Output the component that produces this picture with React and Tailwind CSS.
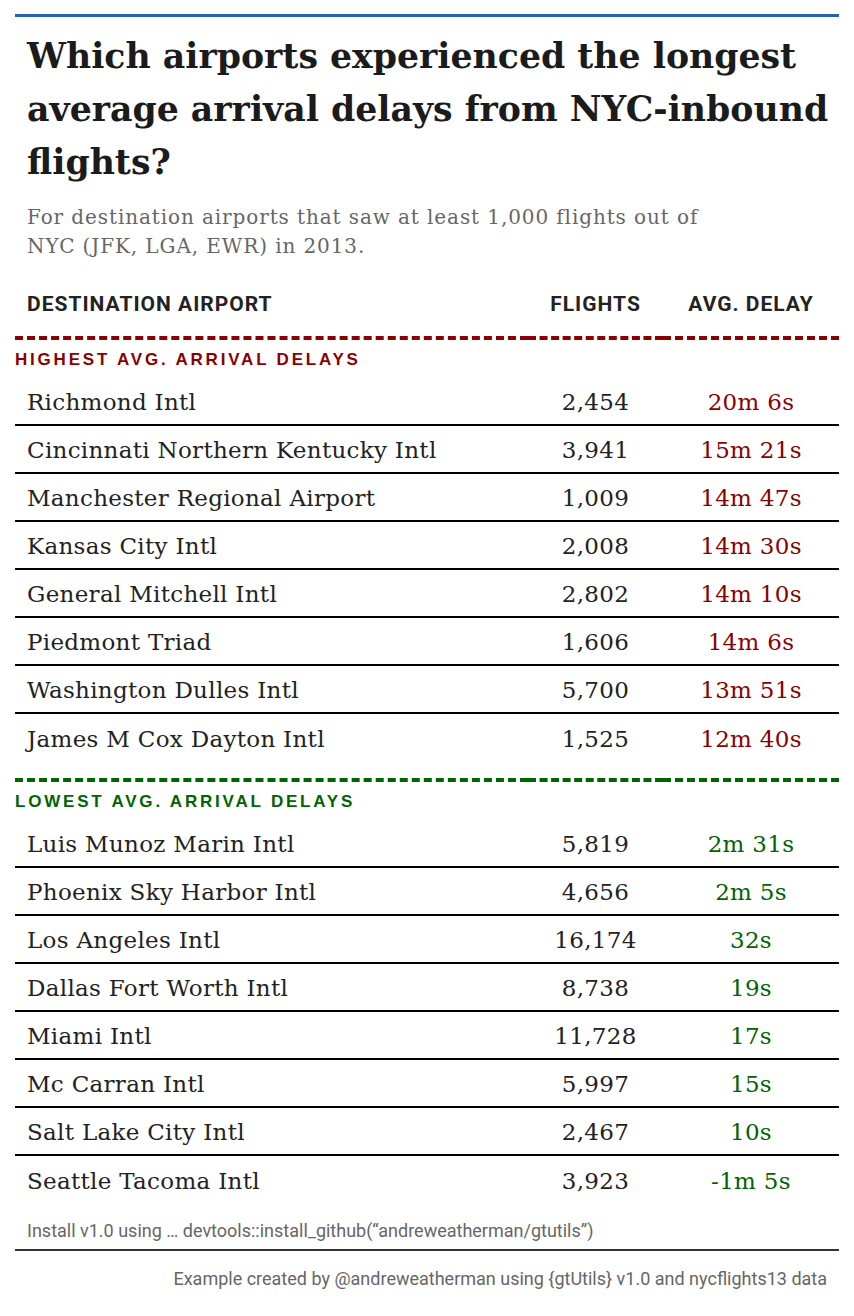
import React from 'react';

const highest = [
  ['Richmond Intl', '2,454', '20m 6s'],
  ['Cincinnati Northern Kentucky Intl', '3,941', '15m 21s'],
  ['Manchester Regional Airport', '1,009', '14m 47s'],
  ['Kansas City Intl', '2,008', '14m 30s'],
  ['General Mitchell Intl', '2,802', '14m 10s'],
  ['Piedmont Triad', '1,606', '14m 6s'],
  ['Washington Dulles Intl', '5,700', '13m 51s'],
  ['James M Cox Dayton Intl', '1,525', '12m 40s'],
];

const lowest = [
  ['Luis Munoz Marin Intl', '5,819', '2m 31s'],
  ['Phoenix Sky Harbor Intl', '4,656', '2m 5s'],
  ['Los Angeles Intl', '16,174', '32s'],
  ['Dallas Fort Worth Intl', '8,738', '19s'],
  ['Miami Intl', '11,728', '17s'],
  ['Mc Carran Intl', '5,997', '15s'],
  ['Salt Lake City Intl', '2,467', '10s'],
  ['Seattle Tacoma Intl', '3,923', '-1m 5s'],
];

const cols = 'grid grid-cols-[513px_135px_176px]';
const serif = "font-['DejaVu_Serif',serif]";
const narrow = "font-['Roboto',sans-serif]";

// ─── One group of rows with its dashed heading ───────────────────────────────
const Group = ({ label, rows, tone, first }) => {
  const dash = tone === 'red' ? 'border-[#8b0000]' : 'border-[#006400]';
  const text = tone === 'red' ? 'text-[#8b0000]' : 'text-[#006400]';

  return (
    <div className={first ? '' : 'mt-[16px]'}>
      {!first && (
        <div className={cols}>
          <div className={`border-t-4 border-dashed ${dash}`} />
          <div className={`border-t-4 border-dashed ${dash}`} />
          <div className={`border-t-4 border-dashed ${dash}`} />
        </div>
      )}
      <div
        className={`h-[38px] flex items-center pt-[2px] font-['Liberation_Sans',sans-serif] font-bold text-[17px] tracking-[2.8px] ${text}`}
      >
        {label}
      </div>
      {rows.map(([name, flights, delay], i) => (
        <div
          key={name}
          className={`${cols} h-[48px] items-center pt-[2px] ${serif} text-[23px] tracking-[0.3px] ${
            i < rows.length - 1 ? 'border-b-2 border-black' : ''
          }`}
        >
          <div className="pl-[12px] text-[#222] whitespace-nowrap">{name}</div>
          <div className="text-center text-[#222]">{flights}</div>
          <div className={`text-center ${text}`}>{delay}</div>
        </div>
      ))}
    </div>
  );
};

const App = () => {
  return (
    <div className="min-h-screen bg-white px-[15px] pt-[14px]">
      <div className="border-t-[3px] border-[#2166ac]">
        {/* Title + subtitle */}
        <div className="px-[12px] pt-[12px]">
          <h1 className={`${serif} font-bold text-[34.7px] leading-[53px] text-[#1b1b1b] whitespace-nowrap`}>
            <span className="block">Which airports experienced the longest</span>
            <span className="block">average arrival delays from NYC-inbound</span>
            <span className="block">flights?</span>
          </h1>
          <p className={`mt-[15px] ${serif} text-[20px] tracking-[0.9px] leading-[29px] text-[#666]`}>
            For destination airports that saw at least 1,000 flights out of
            <br />
            NYC (JFK, LGA, EWR) in 2013.
          </p>
        </div>

        {/* Column headers */}
        <div className={`${cols} ${narrow} font-bold text-[21px] leading-[24px] tracking-[1px] text-[#222]`}>
          <div className="pl-[12px] pt-[31px] pb-[20px] border-b-4 border-dashed border-[#8b0000]">
            DESTINATION AIRPORT
          </div>
          <div className="text-center pt-[31px] pb-[20px] border-b-4 border-dashed border-[#8b0000]">
            FLIGHTS
          </div>
          <div className="text-center pt-[31px] pb-[20px] border-b-4 border-dashed border-[#8b0000]">
            AVG. DELAY
          </div>
        </div>

        <Group label="HIGHEST AVG. ARRIVAL DELAYS" rows={highest} tone="red" first />
        <Group label="LOWEST AVG. ARRIVAL DELAYS" rows={lowest} tone="green" />

        {/* Footnote */}
        <div
          className={`h-[47px] flex items-center pt-[8px] pl-[12px] border-b-2 border-[#333] ${narrow} text-[18px] text-[#666]`}
        >
          Install v1.0 using … devtools::install_github(“andreweatherman/gtutils”)
        </div>

        {/* Source note */}
        <div className={`pt-[16px] pr-[12px] text-right ${narrow} text-[18px] leading-[24px] text-[#666]`}>
          Example created by @andreweatherman using {'{gtUtils}'} v1.0 and nycflights13 data
        </div>
      </div>
    </div>
  );
};

export default App;
